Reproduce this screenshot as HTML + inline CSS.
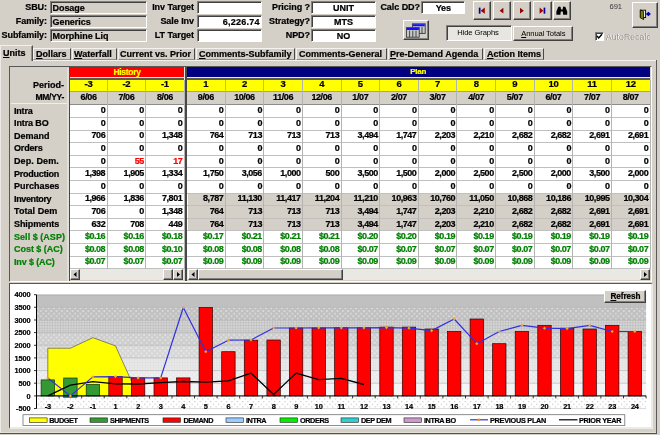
<!DOCTYPE html><html><head><meta charset="utf-8"><title>Demand Plan</title><style>
html,body{margin:0;padding:0;}
body{width:660px;height:435px;overflow:hidden;background:#D4D0C8;position:relative;font-family:"Liberation Sans",sans-serif;font-size:9px;color:#000;}
div,span{position:absolute;box-sizing:border-box;white-space:nowrap;}
.b{font-weight:bold;letter-spacing:-0.15px;}
.lab{font-weight:bold;text-align:right;height:12px;line-height:13px;font-size:9px;letter-spacing:-0.05px;}
.sunk{border-top:1px solid #808080;border-left:1px solid #808080;border-bottom:1px solid #fff;border-right:1px solid #fff;box-shadow:inset 1px 1px 0 #404040;}
.fld{height:13px;line-height:12px;font-weight:bold;font-size:9px;letter-spacing:-0.05px;}
.rais{border-top:1px solid #fff;border-left:1px solid #fff;border-bottom:1px solid #404040;border-right:1px solid #404040;box-shadow:inset -1px -1px 0 #808080;background:#D4D0C8;}
.tab{font-weight:bold;font-size:9px;height:14px;line-height:13px;letter-spacing:0px;}
.tab u{text-decoration:underline;}
.sep{width:2px;height:13px;border-left:1px solid #808080;border-right:1px solid #fff;}
.c,.h,.rl,.lab,.fld,.tab{-webkit-text-stroke:0.22px;}
.c{text-align:right;font-weight:bold;font-size:9px;letter-spacing:-0.45px;height:12px;line-height:12px;}
.h{text-align:center;font-weight:bold;font-size:9px;letter-spacing:-0.3px;height:12px;line-height:12px;}
.rl{font-weight:bold;font-size:9px;letter-spacing:0px;height:12px;line-height:12px;left:14px;}
.g{color:#008000;}
.r{color:#FF0000;}
</style></head><body><div id="app" style="left:0;top:0;width:660px;height:435px;will-change:transform">
<div class="lab" style="left:0;width:47px;top:1px">SBU:</div>
<div class="sunk fld" style="left:50px;width:97px;top:1px;padding-left:1.5px">Dosage</div>
<div class="lab" style="left:0;width:47px;top:15px">Family:</div>
<div class="sunk fld" style="left:50px;width:97px;top:15px;padding-left:1.5px">Generics</div>
<div class="lab" style="left:0;width:47px;top:29px">Subfamily:</div>
<div class="sunk fld" style="left:50px;width:97px;top:29px;padding-left:1.5px">Morphine Liq</div>
<div class="lab" style="left:140px;width:54px;top:1px">Inv Target</div>
<div class="sunk fld" style="left:197.3px;width:65px;top:1px;background:#fff;text-align:right;padding-right:1.6px;letter-spacing:0.25px"></div>
<div class="lab" style="left:140px;width:54px;top:15px">Sale Inv</div>
<div class="sunk fld" style="left:197.3px;width:65px;top:15px;background:#fff;text-align:right;padding-right:1.6px;letter-spacing:0.25px">6,226.74</div>
<div class="lab" style="left:140px;width:54px;top:29px">LT Target</div>
<div class="sunk fld" style="left:197.3px;width:65px;top:29px;background:#fff;text-align:right;padding-right:1.6px;letter-spacing:0.25px"></div>
<div class="lab" style="left:262px;width:48px;top:1px">Pricing ?</div>
<div class="sunk fld" style="left:311px;width:65px;top:1px;background:#fff;text-align:center">UNIT</div>
<div class="lab" style="left:262px;width:48px;top:15px">Strategy?</div>
<div class="sunk fld" style="left:311px;width:65px;top:15px;background:#fff;text-align:center">MTS</div>
<div class="lab" style="left:262px;width:48px;top:29px">NPD?</div>
<div class="sunk fld" style="left:311px;width:65px;top:29px;background:#fff;text-align:center">NO</div>
<div class="lab" style="left:370px;width:50px;top:1px">Calc DD?</div>
<div class="sunk fld" style="left:421.2px;width:44.3px;top:1px;background:#fff;text-align:center">Yes</div>
<div class="rais" style="left:472.7px;top:1.3px;width:18.7px;height:19px"></div>
<div class="rais" style="left:492.7px;top:1.3px;width:18.7px;height:19px"></div>
<div class="rais" style="left:512.7px;top:1.3px;width:18.7px;height:19px"></div>
<div class="rais" style="left:532.9px;top:1.3px;width:18.7px;height:19px"></div>
<div class="rais" style="left:552.7px;top:1.3px;width:18.7px;height:19px"></div>
<div class="rais" style="left:403px;top:19.7px;width:25.5px;height:20.2px"></div>
<div class="sunk" style="left:445.6px;top:25.4px;width:66.2px;height:15.5px;background:#E8E6E1;text-align:center;font-size:7.6px;line-height:13px;letter-spacing:-0.1px;padding-right:1.4px">Hide Graphs</div>
<div class="rais" style="left:513.3px;top:25.8px;width:60px;height:15px;text-align:center;font-size:7.6px;line-height:13.4px;letter-spacing:-0.1px"><u>A</u>nnual Totals</div>
<div style="left:609.6px;top:2px;font-size:7.6px;color:#383838;line-height:10px;letter-spacing:-0.1px">691</div>
<div class="rais" style="left:632px;top:2px;width:25.5px;height:25.5px"></div>
<svg width="660" height="60" viewBox="0 0 660 60" style="position:absolute;left:0;top:0"><rect x="478.8" y="7.6" width="1.7" height="6.1" fill="#0000A0"/><path d="M484.8 7.6 L480.6 10.65 L484.8 13.7Z" fill="#A00000"/><path d="M503.4 7.7 L499.6 10.65 L503.4 13.6Z" fill="#900000"/><path d="M520 7.7 L523.9 10.65 L520 13.6Z" fill="#900000"/><path d="M539.6 7.6 L543.4 10.65 L539.6 13.7Z" fill="#A00000"/><rect x="543.6" y="7.6" width="1.7" height="6.1" fill="#0000A0"/><path d="M556.4 14.8 L556.4 11.5 L558.2 7 L559.8 6.4 L560.6 7 L561 9.5 L562.6 9.5 L563 7 L563.8 6.4 L565.4 7 L567.2 11.5 L567.2 14.8 L563.2 14.8 L562.8 11.6 L560.8 11.6 L560.4 14.8Z" fill="#000"/><rect x="412.4" y="23.8" width="12.8" height="9.6" fill="#C8C8C8" stroke="#383838" stroke-width="0.9"/><rect x="412.79999999999995" y="24.2" width="12" height="2" fill="#1010FF"/><path d="M415.59999999999997 26.8V33.2M418.79999999999995 26.8V33.2M422.0 26.8V33.2" stroke="#383838" stroke-width="0.9"/><rect x="406.4" y="27.6" width="12.8" height="9.6" fill="#C8C8C8" stroke="#383838" stroke-width="0.9"/><rect x="406.79999999999995" y="28.0" width="12" height="2" fill="#1010FF"/><path d="M409.59999999999997 30.6V37.0M412.79999999999995 30.6V37.0M416.0 30.6V37.0" stroke="#383838" stroke-width="0.9"/><rect x="640.6" y="10.2" width="5" height="7.4" fill="#fff" stroke="#000" stroke-width="0.9"/><path d="M640.2 9.9 L643.6 11.4 L643.6 19.6 L640.2 17.6Z" fill="#808000" stroke="#000" stroke-width="0.8"/><path d="M645.8 14 L648.4 11.7 L650.9 14 L648.4 16.3Z" fill="#0000B0"/></svg>
<div class="sunk" style="left:594.5px;top:32px;width:9px;height:9px;background:#fff"><svg width="9" height="9" viewBox="0 0 9 9" style="position:absolute;left:-1px;top:-1px"><path d="M2 4 L3.7 6 L7 2.2" fill="none" stroke="#000" stroke-width="1.4"/></svg></div>
<div style="left:605.8px;top:30.6px;font-size:8.8px;line-height:12px;color:#fff;letter-spacing:0px;margin:0.7px 0 0 0.7px">AutoRecalc</div>
<div style="left:605.8px;top:30.6px;font-size:8.8px;line-height:12px;color:#94928C;letter-spacing:0px">AutoRecalc</div>
<div style="left:0;top:60.4px;width:656px;height:1px;background:#F4F2EE"></div>
<div style="left:0;top:60px;width:0.8px;height:374px;background:#ECEAE6"></div>
<div style="left:655.5px;top:60px;width:1.5px;height:374px;background:#585858"></div>
<div style="left:0;top:432.7px;width:657px;height:1.3px;background:#505050"></div>
<div style="left:1px;top:431.7px;width:654.5px;height:1px;background:#E2E0DA"></div>
<div style="left:0;top:45px;width:33px;height:16px;background:#D4D0C8;border-top:1px solid #F2F0EC;border-left:1px solid #ECEAE6;border-right:1px solid #505050;box-shadow:inset -1px 0 0 #909090"></div>
<div class="tab" style="left:3px;top:46.5px"><u>U</u>nits</div>
<div style="left:33px;top:47.5px;width:37.5px;height:12.5px;border-top:1px solid #F4F2EE;border-left:1px solid #F4F2EE;border-right:1px solid #484848;border-bottom:1px solid #909090"></div>
<div class="tab" style="left:36px;top:47.8px"><u>D</u>ollars</div>
<div style="left:72px;top:47.5px;width:44.5px;height:12.5px;border-top:1px solid #F4F2EE;border-left:1px solid #F4F2EE;border-right:1px solid #484848;border-bottom:1px solid #909090"></div>
<div class="tab" style="left:74px;top:47.8px"><u>W</u>aterfall</div>
<div style="left:118px;top:47.5px;width:76.5px;height:12.5px;border-top:1px solid #F4F2EE;border-left:1px solid #F4F2EE;border-right:1px solid #484848;border-bottom:1px solid #909090"></div>
<div class="tab" style="left:120px;top:47.8px">Current vs. Prior</div>
<div style="left:196px;top:47.5px;width:98.5px;height:12.5px;border-top:1px solid #F4F2EE;border-left:1px solid #F4F2EE;border-right:1px solid #484848;border-bottom:1px solid #909090"></div>
<div class="tab" style="left:199px;top:47.8px"><u>C</u>omments-Subfamily</div>
<div style="left:296px;top:47.5px;width:90.5px;height:12.5px;border-top:1px solid #F4F2EE;border-left:1px solid #F4F2EE;border-right:1px solid #484848;border-bottom:1px solid #909090"></div>
<div class="tab" style="left:299px;top:47.8px">Comments-General</div>
<div style="left:388px;top:47.5px;width:94.5px;height:12.5px;border-top:1px solid #F4F2EE;border-left:1px solid #F4F2EE;border-right:1px solid #484848;border-bottom:1px solid #909090"></div>
<div class="tab" style="left:390px;top:47.8px"><u>P</u>re-Demand Agenda</div>
<div style="left:484px;top:47.5px;width:59.5px;height:12.5px;border-top:1px solid #F4F2EE;border-left:1px solid #F4F2EE;border-right:1px solid #484848;border-bottom:1px solid #909090"></div>
<div class="tab" style="left:487px;top:47.8px"><u>A</u>ction Items</div>
<div style="left:9px;top:66.4px;width:643px;height:215.6px;border-top:1.6px solid #585858;border-left:1.6px solid #585858;border-right:1px solid #fff;border-bottom:1px solid #fff;"></div>
<div style="left:67px;top:67.6px;width:1.9px;height:213.4px;background:#E2E0DA"></div>
<div style="left:68.8px;top:67px;width:1.4px;height:214px;background:#484848"></div>
<div style="left:10.6px;top:103.4px;width:56.4px;height:1px;background:#F0EEEA"></div>
<div style="left:70px;top:77px;width:580px;height:1.5px;background:#ECEAE4"></div>
<div style="left:70px;top:78.4px;width:580px;height:1.3px;background:#585858"></div>
<div style="left:183.9px;top:67px;width:1.2px;height:37px;background:#ECEAE4"></div>
<div class="h" style="left:70.1px;top:67.3px;width:113.8px;height:9.7px;line-height:10px;background:#FF0000;color:#FFFF00;font-size:8.5px">History</div>
<div class="h" style="left:186.3px;top:67.3px;width:463.7px;height:9.7px;line-height:10px;background:#000080;color:#FFFF00;font-size:8px">Plan</div>
<div style="left:185.0px;top:67px;width:1.5px;height:214px;background:#484848"></div>
<div class="rl" style="left:11px;width:53px;text-align:right;top:79px">Period-</div>
<div class="rl" style="left:11px;width:53px;text-align:right;top:91.2px;font-size:8.5px;letter-spacing:-0.3px">MM/YY-</div>
<div style="left:70.1px;top:104.95px;width:114.0px;height:163.735px;background:#fff"></div>
<div style="left:187px;top:104.95px;width:463px;height:163.735px;background:#fff"></div>
<div style="left:187.6px;top:193.41500000000002px;width:462.4px;height:36.385px;background:#D4D0C8"></div>
<div style="left:70.1px;top:79.6px;width:114.0px;height:11.6px;background:#FFFF00"></div>
<div style="left:70.1px;top:91.2px;width:114.0px;height:13.6px;background:#D4D0C8;border-top:1px solid #A0A0A0;border-bottom:1px solid #8C8C8C"></div>
<div style="left:187.0px;top:79.6px;width:463.0px;height:11.6px;background:#FFFF00"></div>
<div style="left:187.0px;top:91.2px;width:463.0px;height:13.6px;background:#D4D0C8;border-top:1px solid #A0A0A0;border-bottom:1px solid #8C8C8C"></div>
<div style="left:70.1px;top:117.05px;width:114.0px;height:1px;background:#C0C0C0"></div>
<div style="left:70.1px;top:129.64px;width:114.0px;height:1px;background:#C0C0C0"></div>
<div style="left:70.1px;top:142.24px;width:114.0px;height:1px;background:#C0C0C0"></div>
<div style="left:70.1px;top:154.83px;width:114.0px;height:1px;background:#C0C0C0"></div>
<div style="left:70.1px;top:167.43px;width:114.0px;height:1px;background:#C0C0C0"></div>
<div style="left:70.1px;top:180.02px;width:114.0px;height:1px;background:#C0C0C0"></div>
<div style="left:70.1px;top:192.62px;width:114.0px;height:1px;background:#C0C0C0"></div>
<div style="left:70.1px;top:205.21px;width:114.0px;height:1px;background:#C0C0C0"></div>
<div style="left:70.1px;top:217.81px;width:114.0px;height:1px;background:#C0C0C0"></div>
<div style="left:70.1px;top:230.40px;width:114.0px;height:1px;background:#C0C0C0"></div>
<div style="left:70.1px;top:243.00px;width:114.0px;height:1px;background:#C0C0C0"></div>
<div style="left:70.1px;top:255.59px;width:114.0px;height:1px;background:#C0C0C0"></div>
<div style="left:70.1px;top:268.19px;width:114.0px;height:1px;background:#C0C0C0"></div>
<div style="left:106.50px;top:79.6px;width:1px;height:189.09px;background:#B4B4B4"></div>
<div style="left:145.20px;top:79.6px;width:1px;height:189.09px;background:#B4B4B4"></div>
<div style="left:183.60px;top:79.6px;width:1px;height:189.09px;background:#B4B4B4"></div>
<div style="left:186.5px;top:117.05px;width:463.5px;height:1px;background:#C0C0C0"></div>
<div style="left:186.5px;top:129.64px;width:463.5px;height:1px;background:#C0C0C0"></div>
<div style="left:186.5px;top:142.24px;width:463.5px;height:1px;background:#C0C0C0"></div>
<div style="left:186.5px;top:154.83px;width:463.5px;height:1px;background:#C0C0C0"></div>
<div style="left:186.5px;top:167.43px;width:463.5px;height:1px;background:#C0C0C0"></div>
<div style="left:186.5px;top:180.02px;width:463.5px;height:1px;background:#C0C0C0"></div>
<div style="left:186.5px;top:192.62px;width:463.5px;height:1px;background:#C0C0C0"></div>
<div style="left:186.5px;top:205.21px;width:463.5px;height:1px;background:#C0C0C0"></div>
<div style="left:186.5px;top:217.81px;width:463.5px;height:1px;background:#C0C0C0"></div>
<div style="left:186.5px;top:230.40px;width:463.5px;height:1px;background:#C0C0C0"></div>
<div style="left:186.5px;top:243.00px;width:463.5px;height:1px;background:#C0C0C0"></div>
<div style="left:186.5px;top:255.59px;width:463.5px;height:1px;background:#C0C0C0"></div>
<div style="left:186.5px;top:268.19px;width:463.5px;height:1px;background:#C0C0C0"></div>
<div style="left:224.62px;top:79.6px;width:1px;height:189.09px;background:#B4B4B4"></div>
<div style="left:263.25px;top:79.6px;width:1px;height:189.09px;background:#B4B4B4"></div>
<div style="left:301.88px;top:79.6px;width:1px;height:189.09px;background:#B4B4B4"></div>
<div style="left:340.50px;top:79.6px;width:1px;height:189.09px;background:#B4B4B4"></div>
<div style="left:379.12px;top:79.6px;width:1px;height:189.09px;background:#B4B4B4"></div>
<div style="left:417.75px;top:79.6px;width:1px;height:189.09px;background:#B4B4B4"></div>
<div style="left:456.38px;top:79.6px;width:1px;height:189.09px;background:#B4B4B4"></div>
<div style="left:495.00px;top:79.6px;width:1px;height:189.09px;background:#B4B4B4"></div>
<div style="left:533.62px;top:79.6px;width:1px;height:189.09px;background:#B4B4B4"></div>
<div style="left:572.25px;top:79.6px;width:1px;height:189.09px;background:#B4B4B4"></div>
<div style="left:610.88px;top:79.6px;width:1px;height:189.09px;background:#B4B4B4"></div>
<div style="left:649.50px;top:79.6px;width:1px;height:189.09px;background:#B4B4B4"></div>
<div class="h" style="left:70.10px;top:77.7px;width:36.90px;font-size:9.5px">-3</div>
<div class="h" style="left:70.10px;top:90.8px;width:36.90px;font-size:9px;letter-spacing:-0.4px">6/06</div>
<div class="h" style="left:107.00px;top:77.7px;width:38.70px;font-size:9.5px">-2</div>
<div class="h" style="left:107.00px;top:90.8px;width:38.70px;font-size:9px;letter-spacing:-0.4px">7/06</div>
<div class="h" style="left:145.70px;top:77.7px;width:38.40px;font-size:9.5px">-1</div>
<div class="h" style="left:145.70px;top:90.8px;width:38.40px;font-size:9px;letter-spacing:-0.4px">8/06</div>
<div class="h" style="left:186.50px;top:77.7px;width:38.62px;font-size:9.5px">1</div>
<div class="h" style="left:186.50px;top:90.8px;width:38.62px;font-size:9px;letter-spacing:-0.4px">9/06</div>
<div class="h" style="left:225.12px;top:77.7px;width:38.62px;font-size:9.5px">2</div>
<div class="h" style="left:225.12px;top:90.8px;width:38.62px;font-size:9px;letter-spacing:-0.4px">10/06</div>
<div class="h" style="left:263.75px;top:77.7px;width:38.62px;font-size:9.5px">3</div>
<div class="h" style="left:263.75px;top:90.8px;width:38.62px;font-size:9px;letter-spacing:-0.4px">11/06</div>
<div class="h" style="left:302.38px;top:77.7px;width:38.62px;font-size:9.5px">4</div>
<div class="h" style="left:302.38px;top:90.8px;width:38.62px;font-size:9px;letter-spacing:-0.4px">12/06</div>
<div class="h" style="left:341.00px;top:77.7px;width:38.62px;font-size:9.5px">5</div>
<div class="h" style="left:341.00px;top:90.8px;width:38.62px;font-size:9px;letter-spacing:-0.4px">1/07</div>
<div class="h" style="left:379.62px;top:77.7px;width:38.62px;font-size:9.5px">6</div>
<div class="h" style="left:379.62px;top:90.8px;width:38.62px;font-size:9px;letter-spacing:-0.4px">2/07</div>
<div class="h" style="left:418.25px;top:77.7px;width:38.62px;font-size:9.5px">7</div>
<div class="h" style="left:418.25px;top:90.8px;width:38.62px;font-size:9px;letter-spacing:-0.4px">3/07</div>
<div class="h" style="left:456.88px;top:77.7px;width:38.62px;font-size:9.5px">8</div>
<div class="h" style="left:456.88px;top:90.8px;width:38.62px;font-size:9px;letter-spacing:-0.4px">4/07</div>
<div class="h" style="left:495.50px;top:77.7px;width:38.62px;font-size:9.5px">9</div>
<div class="h" style="left:495.50px;top:90.8px;width:38.62px;font-size:9px;letter-spacing:-0.4px">5/07</div>
<div class="h" style="left:534.12px;top:77.7px;width:38.62px;font-size:9.5px">10</div>
<div class="h" style="left:534.12px;top:90.8px;width:38.62px;font-size:9px;letter-spacing:-0.4px">6/07</div>
<div class="h" style="left:572.75px;top:77.7px;width:38.62px;font-size:9.5px">11</div>
<div class="h" style="left:572.75px;top:90.8px;width:38.62px;font-size:9px;letter-spacing:-0.4px">7/07</div>
<div class="h" style="left:611.38px;top:77.7px;width:38.62px;font-size:9.5px">12</div>
<div class="h" style="left:611.38px;top:90.8px;width:38.62px;font-size:9px;letter-spacing:-0.4px">8/07</div>
<div class="rl" style="top:104.65px;letter-spacing:-0.2px">Intra</div>
<div class="c" style="left:70.10px;width:35.10px;top:104.25px">0</div>
<div class="c" style="left:107.00px;width:36.90px;top:104.25px">0</div>
<div class="c" style="left:145.70px;width:36.60px;top:104.25px">0</div>
<div class="c" style="left:186.50px;width:36.83px;top:104.25px">0</div>
<div class="c" style="left:225.12px;width:36.83px;top:104.25px">0</div>
<div class="c" style="left:263.75px;width:36.83px;top:104.25px">0</div>
<div class="c" style="left:302.38px;width:36.83px;top:104.25px">0</div>
<div class="c" style="left:341.00px;width:36.83px;top:104.25px">0</div>
<div class="c" style="left:379.62px;width:36.83px;top:104.25px">0</div>
<div class="c" style="left:418.25px;width:36.83px;top:104.25px">0</div>
<div class="c" style="left:456.88px;width:36.83px;top:104.25px">0</div>
<div class="c" style="left:495.50px;width:36.83px;top:104.25px">0</div>
<div class="c" style="left:534.12px;width:36.83px;top:104.25px">0</div>
<div class="c" style="left:572.75px;width:36.83px;top:104.25px">0</div>
<div class="c" style="left:611.38px;width:36.83px;top:104.25px">0</div>
<div class="rl" style="top:117.25px;letter-spacing:-0.12px">Intra BO</div>
<div class="c" style="left:70.10px;width:35.10px;top:116.84px">0</div>
<div class="c" style="left:107.00px;width:36.90px;top:116.84px">0</div>
<div class="c" style="left:145.70px;width:36.60px;top:116.84px">0</div>
<div class="c" style="left:186.50px;width:36.83px;top:116.84px">0</div>
<div class="c" style="left:225.12px;width:36.83px;top:116.84px">0</div>
<div class="c" style="left:263.75px;width:36.83px;top:116.84px">0</div>
<div class="c" style="left:302.38px;width:36.83px;top:116.84px">0</div>
<div class="c" style="left:341.00px;width:36.83px;top:116.84px">0</div>
<div class="c" style="left:379.62px;width:36.83px;top:116.84px">0</div>
<div class="c" style="left:418.25px;width:36.83px;top:116.84px">0</div>
<div class="c" style="left:456.88px;width:36.83px;top:116.84px">0</div>
<div class="c" style="left:495.50px;width:36.83px;top:116.84px">0</div>
<div class="c" style="left:534.12px;width:36.83px;top:116.84px">0</div>
<div class="c" style="left:572.75px;width:36.83px;top:116.84px">0</div>
<div class="c" style="left:611.38px;width:36.83px;top:116.84px">0</div>
<div class="rl" style="top:129.84px;letter-spacing:0px">Demand</div>
<div class="c" style="left:70.10px;width:35.10px;top:129.44px">706</div>
<div class="c" style="left:107.00px;width:36.90px;top:129.44px">0</div>
<div class="c" style="left:145.70px;width:36.60px;top:129.44px">1,348</div>
<div class="c" style="left:186.50px;width:36.83px;top:129.44px">764</div>
<div class="c" style="left:225.12px;width:36.83px;top:129.44px">713</div>
<div class="c" style="left:263.75px;width:36.83px;top:129.44px">713</div>
<div class="c" style="left:302.38px;width:36.83px;top:129.44px">713</div>
<div class="c" style="left:341.00px;width:36.83px;top:129.44px">3,494</div>
<div class="c" style="left:379.62px;width:36.83px;top:129.44px">1,747</div>
<div class="c" style="left:418.25px;width:36.83px;top:129.44px">2,203</div>
<div class="c" style="left:456.88px;width:36.83px;top:129.44px">2,210</div>
<div class="c" style="left:495.50px;width:36.83px;top:129.44px">2,682</div>
<div class="c" style="left:534.12px;width:36.83px;top:129.44px">2,682</div>
<div class="c" style="left:572.75px;width:36.83px;top:129.44px">2,691</div>
<div class="c" style="left:611.38px;width:36.83px;top:129.44px">2,691</div>
<div class="rl" style="top:142.44px;letter-spacing:-0.16px">Orders</div>
<div class="c" style="left:70.10px;width:35.10px;top:142.04px">0</div>
<div class="c" style="left:107.00px;width:36.90px;top:142.04px">0</div>
<div class="c" style="left:145.70px;width:36.60px;top:142.04px">0</div>
<div class="c" style="left:186.50px;width:36.83px;top:142.04px">0</div>
<div class="c" style="left:225.12px;width:36.83px;top:142.04px">0</div>
<div class="c" style="left:263.75px;width:36.83px;top:142.04px">0</div>
<div class="c" style="left:302.38px;width:36.83px;top:142.04px">0</div>
<div class="c" style="left:341.00px;width:36.83px;top:142.04px">0</div>
<div class="c" style="left:379.62px;width:36.83px;top:142.04px">0</div>
<div class="c" style="left:418.25px;width:36.83px;top:142.04px">0</div>
<div class="c" style="left:456.88px;width:36.83px;top:142.04px">0</div>
<div class="c" style="left:495.50px;width:36.83px;top:142.04px">0</div>
<div class="c" style="left:534.12px;width:36.83px;top:142.04px">0</div>
<div class="c" style="left:572.75px;width:36.83px;top:142.04px">0</div>
<div class="c" style="left:611.38px;width:36.83px;top:142.04px">0</div>
<div class="rl" style="top:155.03px;letter-spacing:0.09px">Dep. Dem.</div>
<div class="c" style="left:70.10px;width:35.10px;top:154.63px">0</div>
<div class="c r" style="left:107.00px;width:36.90px;top:154.63px">55</div>
<div class="c r" style="left:145.70px;width:36.60px;top:154.63px">17</div>
<div class="c" style="left:186.50px;width:36.83px;top:154.63px">0</div>
<div class="c" style="left:225.12px;width:36.83px;top:154.63px">0</div>
<div class="c" style="left:263.75px;width:36.83px;top:154.63px">0</div>
<div class="c" style="left:302.38px;width:36.83px;top:154.63px">0</div>
<div class="c" style="left:341.00px;width:36.83px;top:154.63px">0</div>
<div class="c" style="left:379.62px;width:36.83px;top:154.63px">0</div>
<div class="c" style="left:418.25px;width:36.83px;top:154.63px">0</div>
<div class="c" style="left:456.88px;width:36.83px;top:154.63px">0</div>
<div class="c" style="left:495.50px;width:36.83px;top:154.63px">0</div>
<div class="c" style="left:534.12px;width:36.83px;top:154.63px">0</div>
<div class="c" style="left:572.75px;width:36.83px;top:154.63px">0</div>
<div class="c" style="left:611.38px;width:36.83px;top:154.63px">0</div>
<div class="rl" style="top:167.63px;letter-spacing:-0.24px">Production</div>
<div class="c" style="left:70.10px;width:35.10px;top:167.23px">1,398</div>
<div class="c" style="left:107.00px;width:36.90px;top:167.23px">1,905</div>
<div class="c" style="left:145.70px;width:36.60px;top:167.23px">1,334</div>
<div class="c" style="left:186.50px;width:36.83px;top:167.23px">1,750</div>
<div class="c" style="left:225.12px;width:36.83px;top:167.23px">3,056</div>
<div class="c" style="left:263.75px;width:36.83px;top:167.23px">1,000</div>
<div class="c" style="left:302.38px;width:36.83px;top:167.23px">500</div>
<div class="c" style="left:341.00px;width:36.83px;top:167.23px">3,500</div>
<div class="c" style="left:379.62px;width:36.83px;top:167.23px">1,500</div>
<div class="c" style="left:418.25px;width:36.83px;top:167.23px">2,000</div>
<div class="c" style="left:456.88px;width:36.83px;top:167.23px">2,500</div>
<div class="c" style="left:495.50px;width:36.83px;top:167.23px">2,500</div>
<div class="c" style="left:534.12px;width:36.83px;top:167.23px">2,000</div>
<div class="c" style="left:572.75px;width:36.83px;top:167.23px">3,500</div>
<div class="c" style="left:611.38px;width:36.83px;top:167.23px">2,000</div>
<div class="rl" style="top:180.22px;letter-spacing:-0.02px">Purchases</div>
<div class="c" style="left:70.10px;width:35.10px;top:179.82px">0</div>
<div class="c" style="left:107.00px;width:36.90px;top:179.82px">0</div>
<div class="c" style="left:145.70px;width:36.60px;top:179.82px">0</div>
<div class="c" style="left:186.50px;width:36.83px;top:179.82px">0</div>
<div class="c" style="left:225.12px;width:36.83px;top:179.82px">0</div>
<div class="c" style="left:263.75px;width:36.83px;top:179.82px">0</div>
<div class="c" style="left:302.38px;width:36.83px;top:179.82px">0</div>
<div class="c" style="left:341.00px;width:36.83px;top:179.82px">0</div>
<div class="c" style="left:379.62px;width:36.83px;top:179.82px">0</div>
<div class="c" style="left:418.25px;width:36.83px;top:179.82px">0</div>
<div class="c" style="left:456.88px;width:36.83px;top:179.82px">0</div>
<div class="c" style="left:495.50px;width:36.83px;top:179.82px">0</div>
<div class="c" style="left:534.12px;width:36.83px;top:179.82px">0</div>
<div class="c" style="left:572.75px;width:36.83px;top:179.82px">0</div>
<div class="c" style="left:611.38px;width:36.83px;top:179.82px">0</div>
<div class="rl" style="top:192.82px;letter-spacing:-0.37px">Inventory</div>
<div class="c" style="left:70.10px;width:35.10px;top:192.42px">1,966</div>
<div class="c" style="left:107.00px;width:36.90px;top:192.42px">1,836</div>
<div class="c" style="left:145.70px;width:36.60px;top:192.42px">7,801</div>
<div class="c" style="left:186.50px;width:36.83px;top:192.42px">8,787</div>
<div class="c" style="left:225.12px;width:36.83px;top:192.42px">11,130</div>
<div class="c" style="left:263.75px;width:36.83px;top:192.42px">11,417</div>
<div class="c" style="left:302.38px;width:36.83px;top:192.42px">11,204</div>
<div class="c" style="left:341.00px;width:36.83px;top:192.42px">11,210</div>
<div class="c" style="left:379.62px;width:36.83px;top:192.42px">10,963</div>
<div class="c" style="left:418.25px;width:36.83px;top:192.42px">10,760</div>
<div class="c" style="left:456.88px;width:36.83px;top:192.42px">11,050</div>
<div class="c" style="left:495.50px;width:36.83px;top:192.42px">10,868</div>
<div class="c" style="left:534.12px;width:36.83px;top:192.42px">10,186</div>
<div class="c" style="left:572.75px;width:36.83px;top:192.42px">10,995</div>
<div class="c" style="left:611.38px;width:36.83px;top:192.42px">10,304</div>
<div class="rl" style="top:205.41px;letter-spacing:0.06px">Total Dem</div>
<div class="c" style="left:70.10px;width:35.10px;top:205.01px">706</div>
<div class="c" style="left:107.00px;width:36.90px;top:205.01px">0</div>
<div class="c" style="left:145.70px;width:36.60px;top:205.01px">1,348</div>
<div class="c" style="left:186.50px;width:36.83px;top:205.01px">764</div>
<div class="c" style="left:225.12px;width:36.83px;top:205.01px">713</div>
<div class="c" style="left:263.75px;width:36.83px;top:205.01px">713</div>
<div class="c" style="left:302.38px;width:36.83px;top:205.01px">713</div>
<div class="c" style="left:341.00px;width:36.83px;top:205.01px">3,494</div>
<div class="c" style="left:379.62px;width:36.83px;top:205.01px">1,747</div>
<div class="c" style="left:418.25px;width:36.83px;top:205.01px">2,203</div>
<div class="c" style="left:456.88px;width:36.83px;top:205.01px">2,210</div>
<div class="c" style="left:495.50px;width:36.83px;top:205.01px">2,682</div>
<div class="c" style="left:534.12px;width:36.83px;top:205.01px">2,682</div>
<div class="c" style="left:572.75px;width:36.83px;top:205.01px">2,691</div>
<div class="c" style="left:611.38px;width:36.83px;top:205.01px">2,691</div>
<div class="rl" style="top:218.01px;letter-spacing:-0.09px">Shipments</div>
<div class="c" style="left:70.10px;width:35.10px;top:217.61px">632</div>
<div class="c" style="left:107.00px;width:36.90px;top:217.61px">708</div>
<div class="c" style="left:145.70px;width:36.60px;top:217.61px">449</div>
<div class="c" style="left:186.50px;width:36.83px;top:217.61px">764</div>
<div class="c" style="left:225.12px;width:36.83px;top:217.61px">713</div>
<div class="c" style="left:263.75px;width:36.83px;top:217.61px">713</div>
<div class="c" style="left:302.38px;width:36.83px;top:217.61px">713</div>
<div class="c" style="left:341.00px;width:36.83px;top:217.61px">3,494</div>
<div class="c" style="left:379.62px;width:36.83px;top:217.61px">1,747</div>
<div class="c" style="left:418.25px;width:36.83px;top:217.61px">2,203</div>
<div class="c" style="left:456.88px;width:36.83px;top:217.61px">2,210</div>
<div class="c" style="left:495.50px;width:36.83px;top:217.61px">2,682</div>
<div class="c" style="left:534.12px;width:36.83px;top:217.61px">2,682</div>
<div class="c" style="left:572.75px;width:36.83px;top:217.61px">2,691</div>
<div class="c" style="left:611.38px;width:36.83px;top:217.61px">2,691</div>
<div class="rl g" style="top:230.60px;letter-spacing:0.04px">Sell $ (ASP)</div>
<div class="c g" style="left:70.10px;width:35.10px;top:230.20px">$0.16</div>
<div class="c g" style="left:107.00px;width:36.90px;top:230.20px">$0.16</div>
<div class="c g" style="left:145.70px;width:36.60px;top:230.20px">$0.18</div>
<div class="c g" style="left:186.50px;width:36.83px;top:230.20px">$0.17</div>
<div class="c g" style="left:225.12px;width:36.83px;top:230.20px">$0.21</div>
<div class="c g" style="left:263.75px;width:36.83px;top:230.20px">$0.21</div>
<div class="c g" style="left:302.38px;width:36.83px;top:230.20px">$0.21</div>
<div class="c g" style="left:341.00px;width:36.83px;top:230.20px">$0.20</div>
<div class="c g" style="left:379.62px;width:36.83px;top:230.20px">$0.20</div>
<div class="c g" style="left:418.25px;width:36.83px;top:230.20px">$0.19</div>
<div class="c g" style="left:456.88px;width:36.83px;top:230.20px">$0.19</div>
<div class="c g" style="left:495.50px;width:36.83px;top:230.20px">$0.19</div>
<div class="c g" style="left:534.12px;width:36.83px;top:230.20px">$0.19</div>
<div class="c g" style="left:572.75px;width:36.83px;top:230.20px">$0.19</div>
<div class="c g" style="left:611.38px;width:36.83px;top:230.20px">$0.19</div>
<div class="rl g" style="top:243.20px;letter-spacing:-0.03px">Cost $ (AC)</div>
<div class="c g" style="left:70.10px;width:35.10px;top:242.80px">$0.08</div>
<div class="c g" style="left:107.00px;width:36.90px;top:242.80px">$0.08</div>
<div class="c g" style="left:145.70px;width:36.60px;top:242.80px">$0.10</div>
<div class="c g" style="left:186.50px;width:36.83px;top:242.80px">$0.08</div>
<div class="c g" style="left:225.12px;width:36.83px;top:242.80px">$0.08</div>
<div class="c g" style="left:263.75px;width:36.83px;top:242.80px">$0.08</div>
<div class="c g" style="left:302.38px;width:36.83px;top:242.80px">$0.08</div>
<div class="c g" style="left:341.00px;width:36.83px;top:242.80px">$0.07</div>
<div class="c g" style="left:379.62px;width:36.83px;top:242.80px">$0.07</div>
<div class="c g" style="left:418.25px;width:36.83px;top:242.80px">$0.07</div>
<div class="c g" style="left:456.88px;width:36.83px;top:242.80px">$0.07</div>
<div class="c g" style="left:495.50px;width:36.83px;top:242.80px">$0.07</div>
<div class="c g" style="left:534.12px;width:36.83px;top:242.80px">$0.07</div>
<div class="c g" style="left:572.75px;width:36.83px;top:242.80px">$0.07</div>
<div class="c g" style="left:611.38px;width:36.83px;top:242.80px">$0.07</div>
<div class="rl g" style="top:255.79px;letter-spacing:-0.13px">Inv $ (AC)</div>
<div class="c g" style="left:70.10px;width:35.10px;top:255.39px">$0.07</div>
<div class="c g" style="left:107.00px;width:36.90px;top:255.39px">$0.07</div>
<div class="c g" style="left:145.70px;width:36.60px;top:255.39px">$0.07</div>
<div class="c g" style="left:186.50px;width:36.83px;top:255.39px">$0.09</div>
<div class="c g" style="left:225.12px;width:36.83px;top:255.39px">$0.09</div>
<div class="c g" style="left:263.75px;width:36.83px;top:255.39px">$0.09</div>
<div class="c g" style="left:302.38px;width:36.83px;top:255.39px">$0.09</div>
<div class="c g" style="left:341.00px;width:36.83px;top:255.39px">$0.09</div>
<div class="c g" style="left:379.62px;width:36.83px;top:255.39px">$0.09</div>
<div class="c g" style="left:418.25px;width:36.83px;top:255.39px">$0.09</div>
<div class="c g" style="left:456.88px;width:36.83px;top:255.39px">$0.09</div>
<div class="c g" style="left:495.50px;width:36.83px;top:255.39px">$0.09</div>
<div class="c g" style="left:534.12px;width:36.83px;top:255.39px">$0.09</div>
<div class="c g" style="left:572.75px;width:36.83px;top:255.39px">$0.09</div>
<div class="c g" style="left:611.38px;width:36.83px;top:255.39px">$0.09</div>
<div style="left:70.1px;top:269.0px;width:114px;height:11.4px;background:#EAE8E3"></div>
<div class="rais" style="left:70.2px;top:269.0px;width:10.3px;height:11.4px"><svg width="11" height="11" viewBox="0 0 11 11" style="position:absolute;left:-1px;top:-1px"><polygon points="6.5,3 3.5,5.5 6.5,8" fill="#000"/></svg></div>
<div class="rais" style="left:173px;top:269.0px;width:10.3px;height:11.4px"><svg width="11" height="11" viewBox="0 0 11 11" style="position:absolute;left:-1px;top:-1px"><polygon points="4,3 7,5.5 4,8" fill="#000"/></svg></div>
<div class="rais" style="left:163px;top:269.0px;width:10px;height:11.4px"></div>
<div style="left:187px;top:269.0px;width:463px;height:11.4px;background:#EAE8E3"></div>
<div class="rais" style="left:187.5px;top:269.0px;width:10.3px;height:11.4px"><svg width="11" height="11" viewBox="0 0 11 11" style="position:absolute;left:-1px;top:-1px"><polygon points="6.5,3 3.5,5.5 6.5,8" fill="#000"/></svg></div>
<div class="rais" style="left:639.5px;top:269.0px;width:10.3px;height:11.4px"><svg width="11" height="11" viewBox="0 0 11 11" style="position:absolute;left:-1px;top:-1px"><polygon points="4,3 7,5.5 4,8" fill="#000"/></svg></div>
<div class="rais" style="left:198px;top:269.0px;width:144.5px;height:11.4px"></div>
<div style="left:8.8px;top:283.4px;width:643.9px;height:145.6px;background:#fff;border-top:1.7px solid #585858;border-left:1.3px solid #505050;border-right:2.3px solid #ECEAE6;border-bottom:2px solid #ECEAE6"></div>
<svg width="660" height="435" viewBox="0 0 660 435" style="position:absolute;left:0;top:0;pointer-events:none" font-family="Liberation Sans, sans-serif"><defs><pattern id="pd" width="5.3" height="5.3" patternUnits="userSpaceOnUse"><rect x="0.3" y="0.3" width="1.4" height="1.4" fill="#fff"/><rect x="2.95" y="2.95" width="1.4" height="1.4" fill="#fff"/></pattern><pattern id="pc" width="2.65" height="2.65" patternUnits="userSpaceOnUse"><rect x="0.2" y="0.2" width="1.35" height="1.35" fill="#fff"/></pattern><pattern id="p9" width="5.3" height="5.3" patternUnits="userSpaceOnUse"><rect x="1" y="1" width="1" height="1" fill="#A8A8A8"/><rect x="3.65" y="3.65" width="1" height="1" fill="#A8A8A8"/></pattern></defs><rect x="36.5" y="294.70" width="609.60" height="12.95" fill="#C0C0C0"/><rect x="36.5" y="307.35" width="609.60" height="12.95" fill="#C1C1C1"/><rect x="36.5" y="307.35" width="609.60" height="12.65" fill="url(#pd)" opacity="0.6"/><rect x="36.5" y="320.00" width="609.60" height="12.95" fill="#C1C1C1"/><rect x="36.5" y="320.00" width="609.60" height="12.65" fill="url(#pc)" opacity="0.6"/><rect x="36.5" y="332.65" width="609.60" height="12.95" fill="#CECECE"/><rect x="36.5" y="332.65" width="609.60" height="12.65" fill="url(#pd)" opacity="0.6"/><rect x="36.5" y="345.30" width="609.60" height="12.95" fill="#D7D7D7"/><rect x="36.5" y="345.30" width="609.60" height="12.65" fill="url(#pd)" opacity="0.6"/><rect x="36.5" y="357.95" width="609.60" height="12.95" fill="#E0E0E0"/><rect x="36.5" y="357.95" width="609.60" height="12.65" fill="url(#pc)" opacity="0.6"/><rect x="36.5" y="370.60" width="609.60" height="12.95" fill="#EAEAEA"/><rect x="36.5" y="370.60" width="609.60" height="12.65" fill="url(#pd)" opacity="0.6"/><rect x="36.5" y="383.25" width="609.60" height="12.95" fill="#F3F3F3"/><rect x="36.5" y="383.25" width="609.60" height="12.65" fill="url(#pd)" opacity="0.6"/><rect x="36.5" y="395.90" width="609.60" height="12.95" fill="#FFFFFF"/><rect x="36.5" y="395.90" width="609.60" height="12.65" fill="url(#p9)" opacity="0.9"/><line x1="36.5" x2="646.1" y1="307.35" y2="307.35" stroke="#B0B0B0" stroke-width="0.6"/><line x1="36.5" x2="646.1" y1="320.00" y2="320.00" stroke="#B0B0B0" stroke-width="0.6"/><line x1="36.5" x2="646.1" y1="332.65" y2="332.65" stroke="#B0B0B0" stroke-width="0.6"/><line x1="36.5" x2="646.1" y1="345.30" y2="345.30" stroke="#B0B0B0" stroke-width="0.6"/><line x1="36.5" x2="646.1" y1="357.95" y2="357.95" stroke="#B0B0B0" stroke-width="0.6"/><line x1="36.5" x2="646.1" y1="370.60" y2="370.60" stroke="#B0B0B0" stroke-width="0.6"/><line x1="36.5" x2="646.1" y1="383.25" y2="383.25" stroke="#B0B0B0" stroke-width="0.6"/><line x1="36.5" x2="646.1" y1="408.55" y2="408.55" stroke="#C8C8C8" stroke-width="0.7"/><line x1="36.5" x2="646.1" y1="295.00" y2="295.00" stroke="#A8A8A8" stroke-width="0.8"/><polygon points="47.8,395.9 47.8,348.2 70.4,348.2 92.9,337.7 115.5,345.9 138.1,395.9" fill="#FFFF00" stroke="#404040" stroke-width="0.6"/><rect x="41.1" y="379.9" width="13.4" height="16.0" fill="#339933" stroke="#103010" stroke-width="0.7"/><rect x="63.7" y="378.0" width="13.4" height="17.9" fill="#339933" stroke="#103010" stroke-width="0.7"/><rect x="86.2" y="384.5" width="13.4" height="11.4" fill="#339933" stroke="#103010" stroke-width="0.7"/><rect x="63.7" y="395.9" width="13.4" height="1.5" fill="#208080" stroke="#103030" stroke-width="0.5"/><rect x="108.8" y="376.6" width="13.4" height="19.3" fill="#FF0000" stroke="#300000" stroke-width="0.7"/><rect x="131.4" y="377.9" width="13.4" height="18.0" fill="#FF0000" stroke="#300000" stroke-width="0.7"/><rect x="154.0" y="377.9" width="13.4" height="18.0" fill="#FF0000" stroke="#300000" stroke-width="0.7"/><rect x="176.6" y="377.9" width="13.4" height="18.0" fill="#FF0000" stroke="#300000" stroke-width="0.7"/><rect x="199.1" y="307.5" width="13.4" height="88.4" fill="#FF0000" stroke="#300000" stroke-width="0.7"/><rect x="221.7" y="351.7" width="13.4" height="44.2" fill="#FF0000" stroke="#300000" stroke-width="0.7"/><rect x="244.3" y="340.2" width="13.4" height="55.7" fill="#FF0000" stroke="#300000" stroke-width="0.7"/><rect x="266.9" y="340.0" width="13.4" height="55.9" fill="#FF0000" stroke="#300000" stroke-width="0.7"/><rect x="289.4" y="328.0" width="13.4" height="67.9" fill="#FF0000" stroke="#300000" stroke-width="0.7"/><rect x="312.0" y="328.0" width="13.4" height="67.9" fill="#FF0000" stroke="#300000" stroke-width="0.7"/><rect x="334.6" y="327.8" width="13.4" height="68.1" fill="#FF0000" stroke="#300000" stroke-width="0.7"/><rect x="357.2" y="327.8" width="13.4" height="68.1" fill="#FF0000" stroke="#300000" stroke-width="0.7"/><rect x="379.8" y="327.1" width="13.4" height="68.8" fill="#FF0000" stroke="#300000" stroke-width="0.7"/><rect x="402.3" y="327.1" width="13.4" height="68.8" fill="#FF0000" stroke="#300000" stroke-width="0.7"/><rect x="424.9" y="329.0" width="13.4" height="66.9" fill="#FF0000" stroke="#300000" stroke-width="0.7"/><rect x="447.5" y="331.5" width="13.4" height="64.4" fill="#FF0000" stroke="#300000" stroke-width="0.7"/><rect x="470.1" y="319.0" width="13.4" height="76.9" fill="#FF0000" stroke="#300000" stroke-width="0.7"/><rect x="492.6" y="343.7" width="13.4" height="52.2" fill="#FF0000" stroke="#300000" stroke-width="0.7"/><rect x="515.2" y="331.5" width="13.4" height="64.4" fill="#FF0000" stroke="#300000" stroke-width="0.7"/><rect x="537.8" y="325.3" width="13.4" height="70.6" fill="#FF0000" stroke="#300000" stroke-width="0.7"/><rect x="560.4" y="328.2" width="13.4" height="67.7" fill="#FF0000" stroke="#300000" stroke-width="0.7"/><rect x="583.0" y="329.0" width="13.4" height="66.9" fill="#FF0000" stroke="#300000" stroke-width="0.7"/><rect x="605.5" y="325.3" width="13.4" height="70.6" fill="#FF0000" stroke="#300000" stroke-width="0.7"/><rect x="628.1" y="331.5" width="13.4" height="64.4" fill="#FF0000" stroke="#300000" stroke-width="0.7"/><line x1="36.5" x2="36.5" y1="294.7" y2="408.5" stroke="#000" stroke-width="1"/><line x1="36.5" x2="646.1" y1="395.9" y2="395.9" stroke="#000" stroke-width="1"/><line x1="34.0" x2="36.5" y1="294.7" y2="294.7" stroke="#000" stroke-width="0.8"/><text x="30.5" y="297.3" font-size="7.4" font-weight="bold" text-anchor="end" letter-spacing="-0.1" stroke="#000" stroke-width="0.2">4000</text><line x1="34.0" x2="36.5" y1="307.3" y2="307.3" stroke="#000" stroke-width="0.8"/><text x="30.5" y="309.9" font-size="7.4" font-weight="bold" text-anchor="end" letter-spacing="-0.1" stroke="#000" stroke-width="0.2">3500</text><line x1="34.0" x2="36.5" y1="320.0" y2="320.0" stroke="#000" stroke-width="0.8"/><text x="30.5" y="322.6" font-size="7.4" font-weight="bold" text-anchor="end" letter-spacing="-0.1" stroke="#000" stroke-width="0.2">3000</text><line x1="34.0" x2="36.5" y1="332.6" y2="332.6" stroke="#000" stroke-width="0.8"/><text x="30.5" y="335.2" font-size="7.4" font-weight="bold" text-anchor="end" letter-spacing="-0.1" stroke="#000" stroke-width="0.2">2500</text><line x1="34.0" x2="36.5" y1="345.3" y2="345.3" stroke="#000" stroke-width="0.8"/><text x="30.5" y="347.9" font-size="7.4" font-weight="bold" text-anchor="end" letter-spacing="-0.1" stroke="#000" stroke-width="0.2">2000</text><line x1="34.0" x2="36.5" y1="357.9" y2="357.9" stroke="#000" stroke-width="0.8"/><text x="30.5" y="360.6" font-size="7.4" font-weight="bold" text-anchor="end" letter-spacing="-0.1" stroke="#000" stroke-width="0.2">1500</text><line x1="34.0" x2="36.5" y1="370.6" y2="370.6" stroke="#000" stroke-width="0.8"/><text x="30.5" y="373.2" font-size="7.4" font-weight="bold" text-anchor="end" letter-spacing="-0.1" stroke="#000" stroke-width="0.2">1000</text><line x1="34.0" x2="36.5" y1="383.2" y2="383.2" stroke="#000" stroke-width="0.8"/><text x="30.5" y="385.9" font-size="7.4" font-weight="bold" text-anchor="end" letter-spacing="-0.1" stroke="#000" stroke-width="0.2">500</text><line x1="34.0" x2="36.5" y1="395.9" y2="395.9" stroke="#000" stroke-width="0.8"/><text x="30.5" y="398.5" font-size="7.4" font-weight="bold" text-anchor="end" letter-spacing="-0.1" stroke="#000" stroke-width="0.2">0</text><line x1="34.0" x2="36.5" y1="408.5" y2="408.5" stroke="#000" stroke-width="0.8"/><text x="30.5" y="411.1" font-size="7.4" font-weight="bold" text-anchor="end" letter-spacing="-0.1" stroke="#000" stroke-width="0.2">-500</text><line x1="36.5" x2="36.5" y1="395.9" y2="398.4" stroke="#000" stroke-width="0.8"/><line x1="59.1" x2="59.1" y1="395.9" y2="398.4" stroke="#000" stroke-width="0.8"/><line x1="81.7" x2="81.7" y1="395.9" y2="398.4" stroke="#000" stroke-width="0.8"/><line x1="104.2" x2="104.2" y1="395.9" y2="398.4" stroke="#000" stroke-width="0.8"/><line x1="126.8" x2="126.8" y1="395.9" y2="398.4" stroke="#000" stroke-width="0.8"/><line x1="149.4" x2="149.4" y1="395.9" y2="398.4" stroke="#000" stroke-width="0.8"/><line x1="172.0" x2="172.0" y1="395.9" y2="398.4" stroke="#000" stroke-width="0.8"/><line x1="194.5" x2="194.5" y1="395.9" y2="398.4" stroke="#000" stroke-width="0.8"/><line x1="217.1" x2="217.1" y1="395.9" y2="398.4" stroke="#000" stroke-width="0.8"/><line x1="239.7" x2="239.7" y1="395.9" y2="398.4" stroke="#000" stroke-width="0.8"/><line x1="262.3" x2="262.3" y1="395.9" y2="398.4" stroke="#000" stroke-width="0.8"/><line x1="284.9" x2="284.9" y1="395.9" y2="398.4" stroke="#000" stroke-width="0.8"/><line x1="307.4" x2="307.4" y1="395.9" y2="398.4" stroke="#000" stroke-width="0.8"/><line x1="330.0" x2="330.0" y1="395.9" y2="398.4" stroke="#000" stroke-width="0.8"/><line x1="352.6" x2="352.6" y1="395.9" y2="398.4" stroke="#000" stroke-width="0.8"/><line x1="375.2" x2="375.2" y1="395.9" y2="398.4" stroke="#000" stroke-width="0.8"/><line x1="397.7" x2="397.7" y1="395.9" y2="398.4" stroke="#000" stroke-width="0.8"/><line x1="420.3" x2="420.3" y1="395.9" y2="398.4" stroke="#000" stroke-width="0.8"/><line x1="442.9" x2="442.9" y1="395.9" y2="398.4" stroke="#000" stroke-width="0.8"/><line x1="465.5" x2="465.5" y1="395.9" y2="398.4" stroke="#000" stroke-width="0.8"/><line x1="488.1" x2="488.1" y1="395.9" y2="398.4" stroke="#000" stroke-width="0.8"/><line x1="510.6" x2="510.6" y1="395.9" y2="398.4" stroke="#000" stroke-width="0.8"/><line x1="533.2" x2="533.2" y1="395.9" y2="398.4" stroke="#000" stroke-width="0.8"/><line x1="555.8" x2="555.8" y1="395.9" y2="398.4" stroke="#000" stroke-width="0.8"/><line x1="578.4" x2="578.4" y1="395.9" y2="398.4" stroke="#000" stroke-width="0.8"/><line x1="600.9" x2="600.9" y1="395.9" y2="398.4" stroke="#000" stroke-width="0.8"/><line x1="623.5" x2="623.5" y1="395.9" y2="398.4" stroke="#000" stroke-width="0.8"/><line x1="646.1" x2="646.1" y1="395.9" y2="398.4" stroke="#000" stroke-width="0.8"/><text x="47.8" y="408.9" font-size="7.4" font-weight="bold" text-anchor="middle" letter-spacing="-0.2" stroke="#000" stroke-width="0.2">-3</text><text x="70.4" y="408.9" font-size="7.4" font-weight="bold" text-anchor="middle" letter-spacing="-0.2" stroke="#000" stroke-width="0.2">-2</text><text x="92.9" y="408.9" font-size="7.4" font-weight="bold" text-anchor="middle" letter-spacing="-0.2" stroke="#000" stroke-width="0.2">-1</text><text x="115.5" y="408.9" font-size="7.4" font-weight="bold" text-anchor="middle" letter-spacing="-0.2" stroke="#000" stroke-width="0.2">1</text><text x="138.1" y="408.9" font-size="7.4" font-weight="bold" text-anchor="middle" letter-spacing="-0.2" stroke="#000" stroke-width="0.2">2</text><text x="160.7" y="408.9" font-size="7.4" font-weight="bold" text-anchor="middle" letter-spacing="-0.2" stroke="#000" stroke-width="0.2">3</text><text x="183.3" y="408.9" font-size="7.4" font-weight="bold" text-anchor="middle" letter-spacing="-0.2" stroke="#000" stroke-width="0.2">4</text><text x="205.8" y="408.9" font-size="7.4" font-weight="bold" text-anchor="middle" letter-spacing="-0.2" stroke="#000" stroke-width="0.2">5</text><text x="228.4" y="408.9" font-size="7.4" font-weight="bold" text-anchor="middle" letter-spacing="-0.2" stroke="#000" stroke-width="0.2">6</text><text x="251.0" y="408.9" font-size="7.4" font-weight="bold" text-anchor="middle" letter-spacing="-0.2" stroke="#000" stroke-width="0.2">7</text><text x="273.6" y="408.9" font-size="7.4" font-weight="bold" text-anchor="middle" letter-spacing="-0.2" stroke="#000" stroke-width="0.2">8</text><text x="296.1" y="408.9" font-size="7.4" font-weight="bold" text-anchor="middle" letter-spacing="-0.2" stroke="#000" stroke-width="0.2">9</text><text x="318.7" y="408.9" font-size="7.4" font-weight="bold" text-anchor="middle" letter-spacing="-0.2" stroke="#000" stroke-width="0.2">10</text><text x="341.3" y="408.9" font-size="7.4" font-weight="bold" text-anchor="middle" letter-spacing="-0.2" stroke="#000" stroke-width="0.2">11</text><text x="363.9" y="408.9" font-size="7.4" font-weight="bold" text-anchor="middle" letter-spacing="-0.2" stroke="#000" stroke-width="0.2">12</text><text x="386.5" y="408.9" font-size="7.4" font-weight="bold" text-anchor="middle" letter-spacing="-0.2" stroke="#000" stroke-width="0.2">13</text><text x="409.0" y="408.9" font-size="7.4" font-weight="bold" text-anchor="middle" letter-spacing="-0.2" stroke="#000" stroke-width="0.2">14</text><text x="431.6" y="408.9" font-size="7.4" font-weight="bold" text-anchor="middle" letter-spacing="-0.2" stroke="#000" stroke-width="0.2">15</text><text x="454.2" y="408.9" font-size="7.4" font-weight="bold" text-anchor="middle" letter-spacing="-0.2" stroke="#000" stroke-width="0.2">16</text><text x="476.8" y="408.9" font-size="7.4" font-weight="bold" text-anchor="middle" letter-spacing="-0.2" stroke="#000" stroke-width="0.2">17</text><text x="499.3" y="408.9" font-size="7.4" font-weight="bold" text-anchor="middle" letter-spacing="-0.2" stroke="#000" stroke-width="0.2">18</text><text x="521.9" y="408.9" font-size="7.4" font-weight="bold" text-anchor="middle" letter-spacing="-0.2" stroke="#000" stroke-width="0.2">19</text><text x="544.5" y="408.9" font-size="7.4" font-weight="bold" text-anchor="middle" letter-spacing="-0.2" stroke="#000" stroke-width="0.2">20</text><text x="567.1" y="408.9" font-size="7.4" font-weight="bold" text-anchor="middle" letter-spacing="-0.2" stroke="#000" stroke-width="0.2">21</text><text x="589.7" y="408.9" font-size="7.4" font-weight="bold" text-anchor="middle" letter-spacing="-0.2" stroke="#000" stroke-width="0.2">22</text><text x="612.2" y="408.9" font-size="7.4" font-weight="bold" text-anchor="middle" letter-spacing="-0.2" stroke="#000" stroke-width="0.2">23</text><text x="634.8" y="408.9" font-size="7.4" font-weight="bold" text-anchor="middle" letter-spacing="-0.2" stroke="#000" stroke-width="0.2">24</text><polyline points="47.8,395.9 70.4,385.2 92.9,381.7 115.5,383.8 138.1,384.0 160.7,382.7 183.3,381.5 205.8,382.2 228.4,380.8 251.0,373.1 273.6,394.5 296.1,373.1 318.7,379.7 341.3,378.3 363.9,384.5" fill="none" stroke="#000" stroke-width="1.3" stroke-linejoin="round"/><polyline points="47.8,378.0 70.4,395.9 92.9,376.9 115.5,376.6 138.1,377.9 160.7,377.9 183.3,307.5 205.8,351.7 228.4,340.2 251.0,340.0 273.6,328.0 296.1,328.0 318.7,327.8 341.3,327.8 363.9,327.8 386.5,327.6 409.0,328.1 431.6,330.6 454.2,319.0 476.8,343.7 499.3,331.5 521.9,325.3 544.5,328.2 567.1,328.6 589.7,325.3 612.2,331.5 634.8,331.5" fill="none" stroke="#3030E0" stroke-width="1.2" stroke-linejoin="round"/><path d="M46.2 378.0 L47.8 376.4 L49.4 378.0 L47.8 379.6Z" fill="#FFA020"/><path d="M68.8 395.9 L70.4 394.3 L72.0 395.9 L70.4 397.5Z" fill="#FFA020"/><path d="M91.3 376.9 L92.9 375.3 L94.5 376.9 L92.9 378.5Z" fill="#FFA020"/><path d="M113.9 376.6 L115.5 375.0 L117.1 376.6 L115.5 378.2Z" fill="#FFA020"/><path d="M136.5 377.9 L138.1 376.3 L139.7 377.9 L138.1 379.5Z" fill="#FFA020"/><path d="M159.1 377.9 L160.7 376.3 L162.3 377.9 L160.7 379.5Z" fill="#FFA020"/><path d="M181.7 307.5 L183.3 305.9 L184.9 307.5 L183.3 309.1Z" fill="#FFA020"/><path d="M204.2 351.7 L205.8 350.1 L207.4 351.7 L205.8 353.3Z" fill="#FFA020"/><path d="M226.8 340.2 L228.4 338.6 L230.0 340.2 L228.4 341.8Z" fill="#FFA020"/><path d="M249.4 340.0 L251.0 338.4 L252.6 340.0 L251.0 341.6Z" fill="#FFA020"/><path d="M272.0 328.0 L273.6 326.4 L275.2 328.0 L273.6 329.6Z" fill="#FFA020"/><path d="M294.5 328.0 L296.1 326.4 L297.7 328.0 L296.1 329.6Z" fill="#FFA020"/><path d="M317.1 327.8 L318.7 326.2 L320.3 327.8 L318.7 329.4Z" fill="#FFA020"/><path d="M339.7 327.8 L341.3 326.2 L342.9 327.8 L341.3 329.4Z" fill="#FFA020"/><path d="M362.3 327.8 L363.9 326.2 L365.5 327.8 L363.9 329.4Z" fill="#FFA020"/><path d="M384.9 327.6 L386.5 326.0 L388.1 327.6 L386.5 329.2Z" fill="#FFA020"/><path d="M407.4 328.1 L409.0 326.5 L410.6 328.1 L409.0 329.7Z" fill="#FFA020"/><path d="M430.0 330.6 L431.6 329.0 L433.2 330.6 L431.6 332.2Z" fill="#FFA020"/><path d="M452.6 319.0 L454.2 317.4 L455.8 319.0 L454.2 320.6Z" fill="#FFA020"/><path d="M475.2 343.7 L476.8 342.1 L478.4 343.7 L476.8 345.3Z" fill="#FFA020"/><path d="M497.7 331.5 L499.3 329.9 L500.9 331.5 L499.3 333.1Z" fill="#FFA020"/><path d="M520.3 325.3 L521.9 323.7 L523.5 325.3 L521.9 326.9Z" fill="#FFA020"/><path d="M542.9 328.2 L544.5 326.6 L546.1 328.2 L544.5 329.8Z" fill="#FFA020"/><path d="M565.5 328.6 L567.1 327.0 L568.7 328.6 L567.1 330.2Z" fill="#FFA020"/><path d="M588.1 325.3 L589.7 323.7 L591.3 325.3 L589.7 326.9Z" fill="#FFA020"/><path d="M610.6 331.5 L612.2 329.9 L613.8 331.5 L612.2 333.1Z" fill="#FFA020"/><path d="M633.2 331.5 L634.8 329.9 L636.4 331.5 L634.8 333.1Z" fill="#FFA020"/><rect x="23" y="414.7" width="601.8" height="10.8" fill="#fff" stroke="#707070" stroke-width="0.8"/><rect x="29.6" y="417.9" width="17.5" height="4.4" fill="#FFFF00" stroke="#202020" stroke-width="0.6"/><text x="49.2" y="422.5" font-size="7.3" font-weight="bold" letter-spacing="-0.42" stroke="#000" stroke-width="0.2">BUDGET</text><rect x="90" y="417.9" width="17.5" height="4.4" fill="#339933" stroke="#202020" stroke-width="0.6"/><text x="110" y="422.5" font-size="7.3" font-weight="bold" letter-spacing="-0.42" stroke="#000" stroke-width="0.2">SHIPMENTS</text><rect x="163" y="417.9" width="17.5" height="4.4" fill="#FF0000" stroke="#202020" stroke-width="0.6"/><text x="183.5" y="422.5" font-size="7.3" font-weight="bold" letter-spacing="-0.42" stroke="#000" stroke-width="0.2">DEMAND</text><rect x="226" y="417.9" width="17.5" height="4.4" fill="#99CCFF" stroke="#202020" stroke-width="0.6"/><text x="246" y="422.5" font-size="7.3" font-weight="bold" letter-spacing="-0.42" stroke="#000" stroke-width="0.2">INTRA</text><rect x="280" y="417.9" width="17.5" height="4.4" fill="#00EE00" stroke="#202020" stroke-width="0.6"/><text x="300" y="422.5" font-size="7.3" font-weight="bold" letter-spacing="-0.42" stroke="#000" stroke-width="0.2">ORDERS</text><rect x="341" y="417.9" width="17.5" height="4.4" fill="#33CCCC" stroke="#202020" stroke-width="0.6"/><text x="361" y="422.5" font-size="7.3" font-weight="bold" letter-spacing="-0.42" stroke="#000" stroke-width="0.2">DEP DEM</text><rect x="404" y="417.9" width="17.5" height="4.4" fill="#CC99CC" stroke="#202020" stroke-width="0.6"/><text x="424" y="422.5" font-size="7.3" font-weight="bold" letter-spacing="-0.42" stroke="#000" stroke-width="0.2">INTRA BO</text><line x1="470" x2="488" y1="419.8" y2="419.8" stroke="#3030E0" stroke-width="1.2"/><rect x="477.8" y="418.6" width="2.4" height="2.4" fill="#FF9020"/><text x="490" y="422.5" font-size="7.3" font-weight="bold" letter-spacing="-0.27" stroke="#000" stroke-width="0.2">PREVIOUS PLAN</text><line x1="559" x2="577.5" y1="419.8" y2="419.8" stroke="#000" stroke-width="1.2"/><text x="579" y="422.5" font-size="7.3" font-weight="bold" letter-spacing="-0.3" stroke="#000" stroke-width="0.2">PRIOR YEAR</text></svg>
<div class="rais" style="left:604.3px;top:289.5px;width:42.2px;height:13.2px;text-align:center;font-weight:bold;font-size:8.2px;line-height:11.4px;letter-spacing:-0.1px;-webkit-text-stroke:0.2px"><u>R</u>efresh</div>
</div></body></html>
